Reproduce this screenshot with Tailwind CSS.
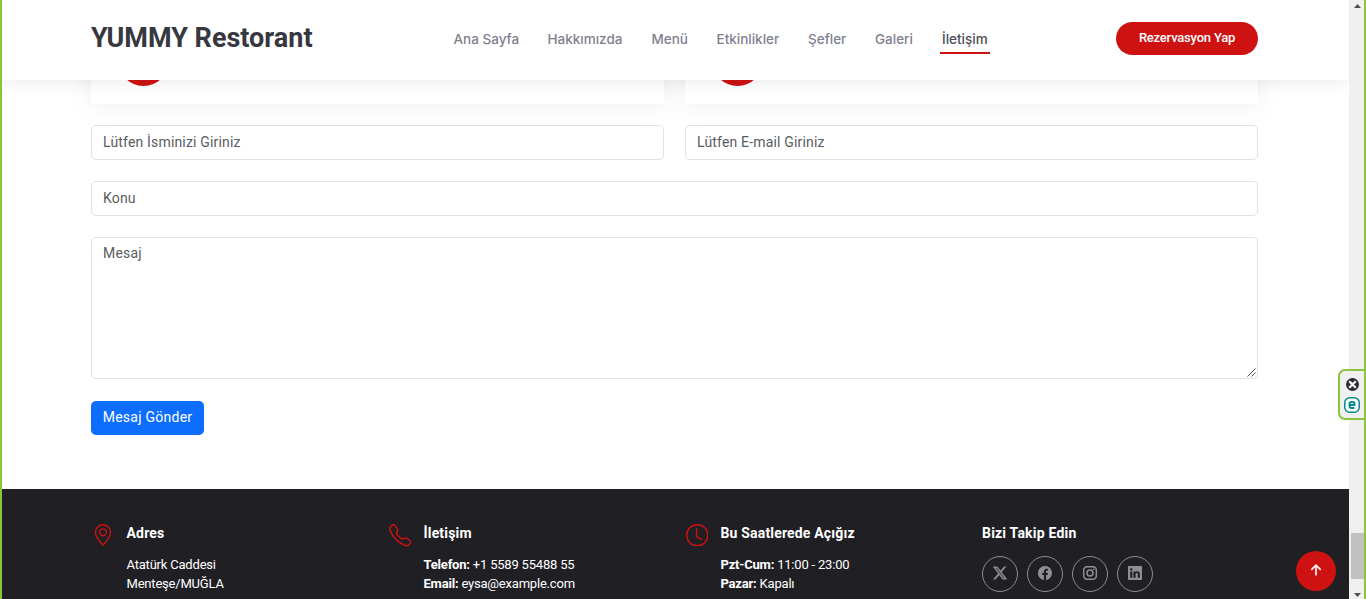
<!DOCTYPE html>
<html lang="tr">
<head>
<meta charset="utf-8">
<title>YUMMY Restorant</title>
<script src="https://cdn.jsdelivr.net/npm/@tailwindcss/browser@4"></script>
</head>
<body class="relative flex h-[599px] w-[1366px] overflow-hidden bg-white font-['Roboto',sans-serif]">
<div class="z-20 w-[2px] shrink-0 bg-[#8bc53f]"></div>
<div class="flex h-full w-[1347px] shrink-0 flex-col overflow-hidden">
  <header class="relative z-10 flex h-[80px] shrink-0 bg-white pl-[89px] shadow-[0_0_18px_rgba(0,0,0,0.1)]">
    <h1 class="mt-[18px] w-[362.500px] text-[27px] leading-[40px] font-bold text-[#37373f]">YUMMY Restorant</h1>
    <nav class="mt-[29px] flex w-[662.500px] gap-[29px] font-['Inter',sans-serif] text-[13.500px] leading-[21px] font-medium whitespace-nowrap text-[#7f7f90]">
      <a class="w-[65px]">Ana Sayfa</a>
      <a class="w-[75px]">Hakkımızda</a>
      <a class="w-[36px]">Menü</a>
      <a class="w-[62.500px]">Etkinlikler</a>
      <a class="w-[38px]">Şefler</a>
      <a class="w-[38.500px]">Galeri</a>
      <a class="-ml-[2.500px] h-[25px] w-[50px] border-b-2 border-[#ce1212] pl-[2px] text-[#4c4c55]">İletişim</a>
    </nav>
    <a class="mt-[22px] h-[33px] w-[142px] rounded-full bg-[#ce1212] text-center text-[13px] leading-[31px] font-medium tracking-[-0.2px] text-white">Rezervasyon Yap</a>
  </header>
  <main class="flex h-[409px] shrink-0 flex-col px-[89px] pr-[91px]">
    <div class="-mt-[76px] flex h-[100px] shrink-0 gap-[21px]">
      <div class="flex w-[573px] items-end bg-white pb-[18px] pl-[26px] shadow-[0_0_25px_rgba(0,0,0,0.08)]"><div class="ml-[1px] size-[51px] rounded-full bg-[#ce1212]"></div></div>
      <div class="flex w-[573px] items-end bg-white pb-[18px] pl-[26px] shadow-[0_0_25px_rgba(0,0,0,0.08)]"><div class="ml-[1px] size-[51px] rounded-full bg-[#ce1212]"></div></div>
    </div>
    <form class="mt-[21px] flex flex-col gap-[21px] text-[14px] leading-[33px] tracking-[0.170px] text-[#595c5f]">
      <div class="flex gap-[21px]">
        <div class="h-[35px] w-[573px] rounded-[5px] border border-[#dee2e6] bg-white pl-[11px]">Lütfen İsminizi Giriniz</div>
        <div class="h-[35px] w-[573px] rounded-[5px] border border-[#dee2e6] bg-white pl-[11px]">Lütfen E-mail Giriniz</div>
      </div>
      <div class="h-[35px] rounded-[5px] border border-[#dee2e6] bg-white pl-[11px]">Konu</div>
      <div class="flex h-[142px] justify-between rounded-[5px] border border-[#dee2e6] bg-white pl-[11px] leading-[31px]">
        <span>Mesaj</span>
        <svg class="mr-[1px] mb-[1px] size-[9px] self-end" viewBox="0 0 9 9" stroke="#555" stroke-width="1" fill="none"><path d="M.5 8.500l8-8M4.500 8.500l4-4"/></svg>
      </div>
      <button class="mt-[1px] h-[34px] w-[113px] rounded-[5px] bg-[#0d6efd] pb-[1px] text-[14px] tracking-[0.250px] text-white">Mesaj Gönder</button>
    </form>
  </main>
  <footer class="flex h-[110px] shrink-0 bg-[#1f1f24] pt-[34px] pl-[90px] text-[13px] leading-[19px] tracking-[-0.2px] whitespace-nowrap text-white">
    <div class="flex w-[297px]">
      <svg class="mt-[1px] mr-[12.500px] size-[22px] shrink-0" viewBox="0 0 16 16" fill="#ce1212"><path d="M12.166 8.940c-.524 1.062-1.234 2.120-1.960 3.070A32 32 0 0 1 8 14.580a32 32 0 0 1-2.206-2.570c-.726-.950-1.436-2.008-1.960-3.070C3.304 7.867 3 6.862 3 6a5 5 0 0 1 10 0c0 .862-.305 1.867-.834 2.940M8 16s6-5.686 6-10A6 6 0 0 0 2 6c0 4.314 6 10 6 10"/><path d="M8 8a2 2 0 1 1 0-4 2 2 0 0 1 0 4m0 1a3 3 0 1 0 0-6 3 3 0 0 0 0 6"/></svg>
      <div><h4 class="mb-[12px] text-[14px] leading-[20px] font-bold tracking-[0.170px]">Adres</h4><p>Atatürk Caddesi</p><p>Menteşe/MUĞLA</p></div>
    </div>
    <div class="flex w-[297px]">
      <svg class="mt-[1px] mr-[12.500px] -ml-[0.500px] size-[22.500px] shrink-0" viewBox="0 0 16 16" fill="#ce1212"><path d="M3.654 1.328a.678.678 0 0 0-1.015-.063L1.605 2.300c-.483.484-.661 1.169-.450 1.770a17.600 17.600 0 0 0 4.168 6.608 17.600 17.600 0 0 0 6.608 4.168c.601.211 1.286.033 1.770-.450l1.034-1.034a.678.678 0 0 0-.063-1.015l-2.307-1.794a.680.680 0 0 0-.580-.122l-2.190.547a1.750 1.750 0 0 1-1.657-.459L5.482 8.062a1.750 1.750 0 0 1-.460-1.657l.548-2.190a.680.680 0 0 0-.122-.580zM1.884.511a1.745 1.745 0 0 1 2.612.163L6.290 2.980c.329.423.445.974.315 1.494l-.547 2.190a.680.680 0 0 0 .178.643l2.457 2.457a.680.680 0 0 0 .644.178l2.189-.547a1.750 1.750 0 0 1 1.494.315l2.306 1.794c.829.645.905 1.870.163 2.611l-1.034 1.034c-.740.740-1.846 1.065-2.877.702a18.600 18.600 0 0 1-7.010-4.420 18.600 18.600 0 0 1-4.420-7.009c-.362-1.030-.037-2.137.703-2.877z"/></svg>
      <div><h4 class="mb-[12px] text-[14px] leading-[20px] font-bold tracking-[0.170px]">İletişim</h4><p><b>Telefon:</b> +1 5589 55488 55</p><p><b>Email:</b> eysa@example.com</p></div>
    </div>
    <div class="flex w-[296px]">
      <svg class="mt-[0.500px] mr-[12.500px] -ml-[0.500px] size-[22.500px] shrink-0" viewBox="0 0 16 16" fill="#ce1212"><path d="M8 3.500a.5.5 0 0 0-1 0V9a.5.5 0 0 0 .252.434l3.500 2a.5.5 0 0 0 .496-.868L8 8.710z"/><path d="M8 16A8 8 0 1 0 8 0a8 8 0 0 0 0 16m7-8A7 7 0 1 1 1 8a7 7 0 0 1 14 0"/></svg>
      <div><h4 class="mb-[12px] text-[14px] leading-[20px] font-bold tracking-[0.170px]">Bu Saatlerede Açığız</h4><p><b>Pzt-Cum:</b> 11:00 - 23:00</p><p><b>Pazar:</b> Kapalı</p></div>
    </div>
    <div>
      <h4 class="mb-[13px] text-[14px] leading-[20px] font-bold tracking-[0.200px]">Bizi Takip Edin</h4>
      <div class="flex gap-[9px] text-[#8f8f91]">
        <a class="flex size-[36px] items-center justify-center rounded-full border border-[#8f8f91] pb-[2px]"><svg class="size-[14px]" viewBox="0 0 16 16" fill="currentColor" stroke="currentColor" stroke-width=".4"><path d="M12.600.750h2.454l-5.360 6.142L16 15.250h-4.937l-3.867-5.070-4.425 5.070H.316l5.733-6.570L0 .750h5.063l3.495 4.633L12.601.750Zm-.860 13.028h1.360L4.323 2.145H2.865z"/></svg></a>
        <a class="flex size-[36px] items-center justify-center rounded-full border border-[#8f8f91] pb-[2px]"><svg class="size-[14px]" viewBox="0 0 16 16" fill="currentColor"><path d="M16 8.049c0-4.446-3.582-8.050-8-8.050C3.580 0-.002 3.603-.002 8.050c0 4.017 2.926 7.347 6.750 7.951v-5.625h-2.030V8.050H6.750V6.275c0-2.017 1.195-3.131 3.022-3.131.876 0 1.791.157 1.791.157v1.980h-1.009c-.993 0-1.303.621-1.303 1.258v1.510h2.218l-.354 2.326H9.250V16c3.824-.604 6.750-3.934 6.750-7.951"/></svg></a>
        <a class="flex size-[36px] items-center justify-center rounded-full border border-[#8f8f91] pb-[2px]"><svg class="size-[14px]" viewBox="0 0 16 16" fill="none" stroke="currentColor" stroke-width="1.700"><rect x=".75" y=".75" width="14.500" height="14.500" rx="4"/><circle cx="8" cy="8" r="3.400"/><circle cx="12.270" cy="3.700" r=".96" fill="currentColor" stroke="none"/></svg></a>
        <a class="flex size-[36px] items-center justify-center rounded-full border border-[#8f8f91] pb-[2px]"><svg class="size-[14px]" viewBox="0 0 16 16" fill="currentColor"><path d="M0 1.146C0 .513.526 0 1.175 0h13.650C15.474 0 16 .513 16 1.146v13.708c0 .633-.526 1.146-1.175 1.146H1.175C.526 16 0 15.487 0 14.854zm4.943 12.248V6.169H2.542v7.225zm-1.200-8.212c.837 0 1.358-.554 1.358-1.248-.015-.709-.520-1.248-1.342-1.248S2.400 3.226 2.400 3.934c0 .694.521 1.248 1.327 1.248zm4.908 8.212V9.359c0-.216.016-.432.080-.586.173-.431.568-.878 1.232-.878.869 0 1.216.662 1.216 1.634v3.865h2.401V9.250c0-2.220-1.184-3.252-2.764-3.252-1.274 0-1.845.700-2.165 1.193v.025h-.016l.016-.025V6.169h-2.400c.030.678 0 7.225 0 7.225z"/></svg></a>
      </div>
    </div>
  </footer>
</div>
<div class="flex w-[15px] shrink-0 flex-col items-end bg-[#f0f0f0]">
  <svg class="mt-[4px] mr-[3px] h-[4px] w-[7px]" viewBox="0 0 7 4" fill="#505050"><path d="M3.500 0L7 4H0z"/></svg>
  <div class="mt-[525px] h-[46px] w-[13px] bg-[#c1c1c1]"></div>
  <svg class="mt-[14px] mr-[3px] h-[4px] w-[7px]" viewBox="0 0 7 4" fill="#505050"><path d="M0 0h7L3.500 4z"/></svg>
</div>
<div class="w-[2px] shrink-0 bg-[#8bc53f]"></div>
<a class="absolute top-[551px] left-[1296px] z-20 flex size-[40px] items-center justify-center rounded-full bg-[#ce1212] pb-[2px]"><svg class="size-[22px]" viewBox="0 0 16 16" fill="#fff" stroke="#fff" stroke-width=".3"><path fill-rule="evenodd" d="M8 12a.5.5 0 0 0 .5-.5V5.707l2.146 2.147a.5.5 0 0 0 .708-.708l-3-3a.5.5 0 0 0-.708 0l-3 3a.5.5 0 1 0 .708.708L7.500 5.707V11.500a.5.5 0 0 0 .5.5"/></svg></a>
<div class="absolute top-[369px] left-[1338px] z-20 flex h-[51px] w-[28px] flex-col items-center gap-[6px] rounded-l-[7px] border-2 border-[#8bc53f] bg-[#f0f0f0] pt-[7px]">
  <svg class="size-[13px]" viewBox="0 0 12 12"><circle cx="6" cy="6" r="6" fill="#2b2b35"/><path d="M3 3l6 6M9 3L3 9" stroke="#fff" stroke-width="2"/></svg>
  <svg class="size-[16px]" viewBox="0 0 16 16" fill="none" stroke="#0a8a92"><rect x=".75" y=".75" width="14.500" height="14.500" rx="5" stroke-width="1.500" fill="#fff"/><path d="M5.500 8h5V7a2 2 0 0 0-2-2h-1a2 2 0 0 0-2 2v2a2 2 0 0 0 2 2h3" stroke-width="2"/></svg>
</div>
</body>
</html>
